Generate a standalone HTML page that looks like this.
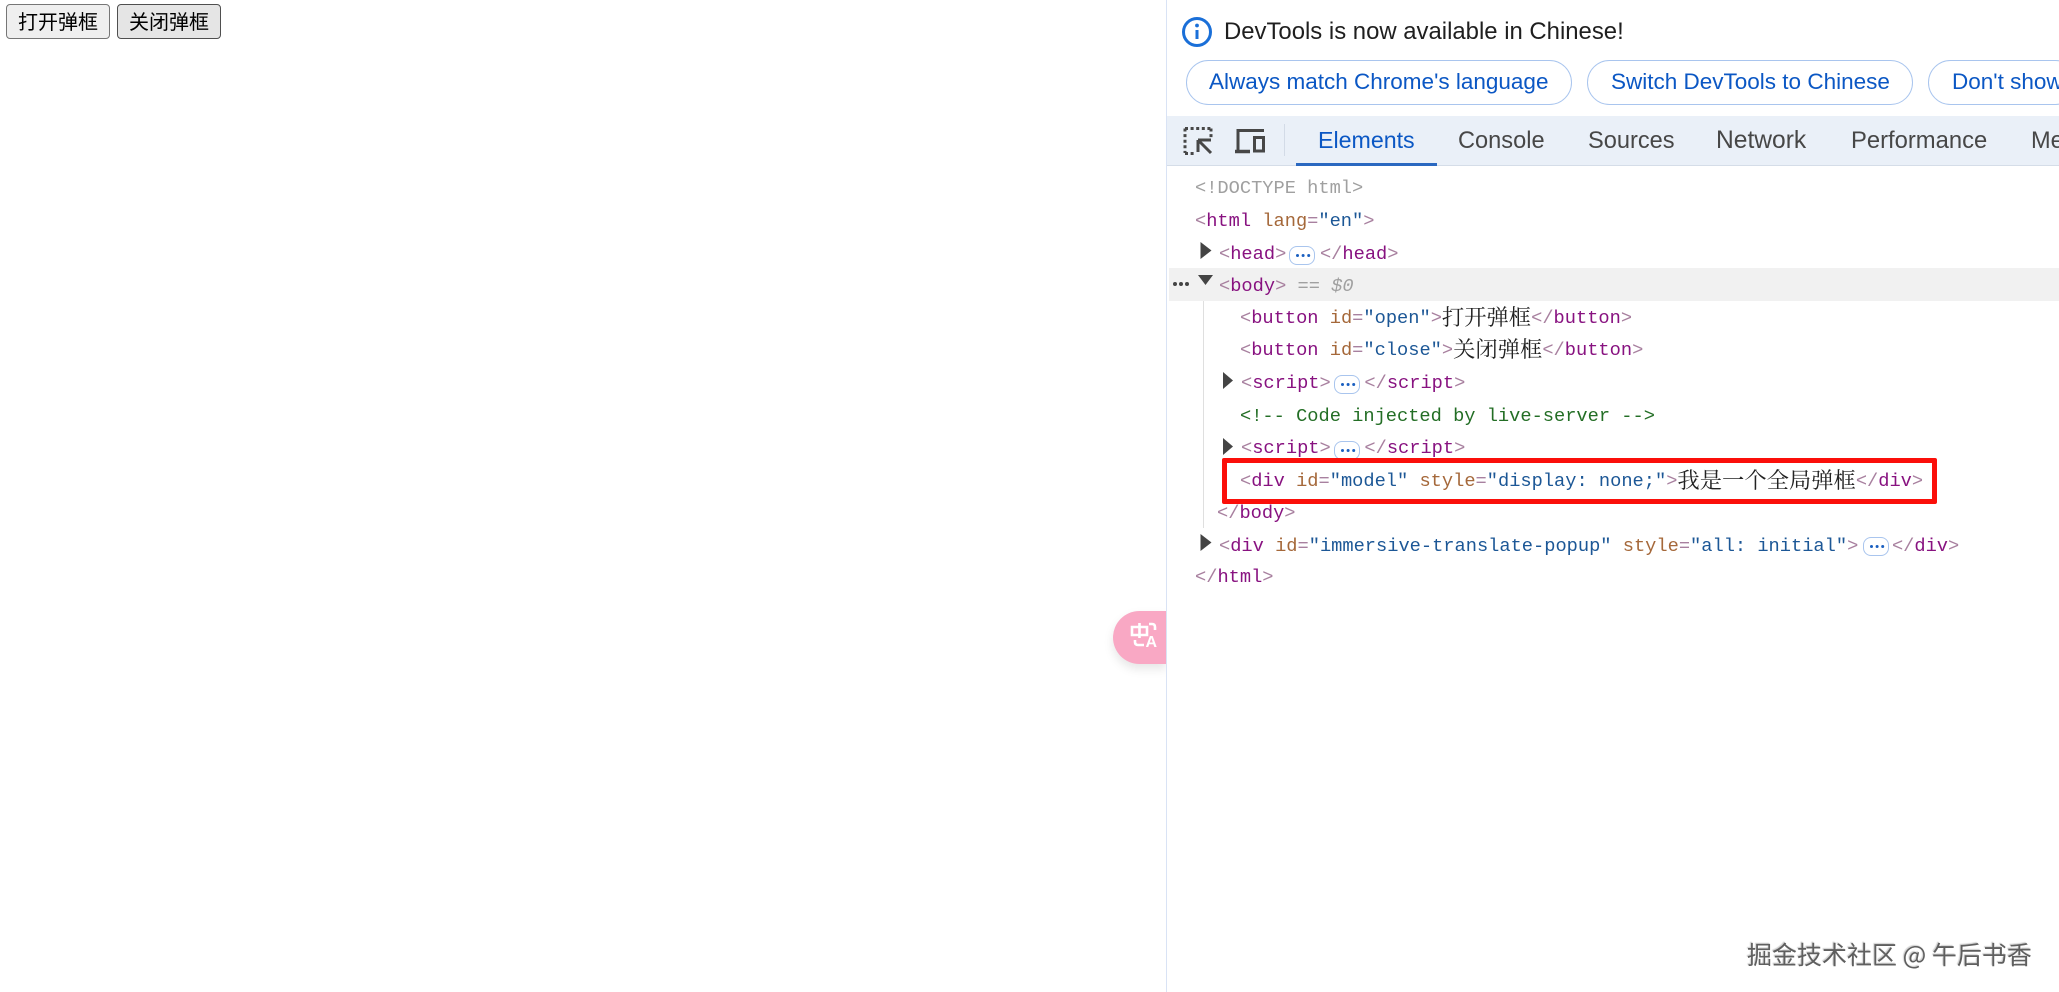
<!DOCTYPE html>
<html lang="en">
<head>
<meta charset="utf-8">
<title>弹框</title>
<style>
html,body{margin:0;padding:0;width:2059px;height:992px;overflow:hidden;background:#fff;position:relative}
body{font-family:"Liberation Sans","Noto Sans CJK SC",sans-serif}
.abs,.btn,.pill,.tab,.l,.dots{position:absolute}
.btn{top:4px;height:35px;width:104px;box-sizing:border-box;border:1.3px solid #767676;border-radius:4px;background:#efefef;color:#000;font:20px/32px "Noto Sans CJK SC",sans-serif;text-align:center}
.pill{top:60px;height:45px;box-sizing:border-box;border:1.3px solid #a9c5ee;border-radius:23px;background:#fff;color:#0b57c4;font-size:22.5px;line-height:41px;white-space:nowrap;overflow:hidden}
.tab{top:117px;height:48px;line-height:48px;font-size:23.6px;color:#474747;white-space:nowrap}
.l{height:32px;line-height:32px;font-family:"Liberation Mono",monospace;font-size:18.7px;white-space:pre;color:#881280}
.b{color:#a8809f}.a{color:#a5683a}.v{color:#1c5796}.c{color:#236e25}.g{color:#a0a0a0}
.z{font-family:"Noto Serif CJK SC","Noto Sans CJK SC",serif;font-size:22.3px;color:#222;line-height:1;position:relative;top:2px}
.dots{width:26px;height:19px;box-sizing:border-box;border:1.2px solid #a9c5ee;border-radius:8px;background:#fff}
.dots:after{content:"";position:absolute;left:5.5px;top:6.5px;width:3.6px;height:3.6px;border-radius:50%;background:#1a5fc0;box-shadow:5.6px 0 0 #1a5fc0,11.2px 0 0 #1a5fc0}
</style>
</head>
<body>
<div class="btn" style="left:6px">打开弹框</div>
<div class="btn" style="left:117px;border-color:#4f4f4f;background:#e5e5e5">关闭弹框</div>

<!-- translate float -->
<div class="abs" style="left:1113px;top:611px;width:53px;height:53px;background:#f9a8c4;border-radius:27px 0 0 27px;box-shadow:0 5px 10px rgba(0,0,0,.1)"></div>
<svg class="abs" style="left:1112px;top:610px" width="54" height="53" viewBox="0 0 54 53" fill="none" stroke="#fff" stroke-width="2.6">
<path d="M20 17h15v8H20zM27.500 13v15"/>
<path d="M37 14h3c2 0 3 1 3 3v3M23 30v2c0 2 1 3 3 3h6"/>
<text x="33.500" y="37" font-family="Liberation Sans" font-size="16" font-weight="bold" fill="#fff" stroke="none">A</text>
</svg>

<!-- devtools -->
<div class="abs" style="left:1166px;top:0;width:893px;height:992px;background:#fff;border-left:1.3px solid #d9e3f5;box-sizing:border-box"></div>

<svg class="abs" style="left:1180px;top:15px" width="34" height="34" viewBox="0 0 34 34" fill="none">
<circle cx="17" cy="17" r="13.500" stroke="#1a6fd8" stroke-width="3"/>
<path d="M17 15v9" stroke="#1a6fd8" stroke-width="3"/><circle cx="17" cy="10.500" r="1.900" fill="#1a6fd8"/>
</svg>
<div class="abs" style="left:1224px;top:14px;line-height:36px;font-size:23.9px;color:#1f1f1f;white-space:nowrap">DevTools is now available in Chinese!</div>

<div class="pill" style="left:1186px;width:386px;padding-left:22px">Always match Chrome's language</div>
<div class="pill" style="left:1587px;width:326px;padding-left:23px">Switch DevTools to Chinese</div>
<div class="pill" style="left:1928px;width:150px;padding-left:23px">Don't show again</div>

<!-- tab bar -->
<div class="abs" style="left:1167px;top:116px;width:892px;height:49px;background:#eaf0f8;border-bottom:1.3px solid #d5dde8"></div>
<svg class="abs" style="left:1180px;top:120px" width="100" height="42" viewBox="0 0 100 42" fill="none" stroke="#474747">
<path d="M5 8.500H31M5 8.500V33M31 8.500V18M5 33.500H14" stroke-width="3" stroke-dasharray="3 2.600"/>
<path d="M18 20H31M18 20V32M18 20L31 33" stroke-width="3"/>
<path d="M58 31V10.500H84" stroke-width="3"/>
<path d="M55 31.500H70" stroke-width="3.500"/>
<rect x="74.500" y="17.500" width="9" height="13.500" stroke-width="3"/>
</svg>
<div class="abs" style="left:1284px;top:124px;width:1px;height:32px;background:#d3dbe7"></div>
<div class="tab" style="left:1318px;top:116px;color:#0b57c4;font-size:23.2px">Elements</div>
<div class="tab" style="left:1458px">Console</div>
<div class="tab" style="left:1588px">Sources</div>
<div class="tab" style="left:1716px;font-size:24.6px">Network</div>
<div class="tab" style="left:1851px;font-size:23.8px">Performance</div>
<div class="tab" style="left:2031px">Memory</div>
<div class="abs" style="left:1296px;top:163px;width:141px;height:3px;background:#2a68c0"></div>

<!-- selection / guide -->
<div class="abs" style="left:1169px;top:268px;width:890px;height:33px;background:#f1f1f1"></div>
<div class="abs" style="left:1203px;top:301px;width:1px;height:227px;background:#dfdfdf"></div>

<!-- code -->
<div class="l g" style="left:1195px;top:172px">&lt;!DOCTYPE html&gt;</div>
<div class="l" style="left:1195px;top:205px"><span class="b">&lt;</span>html <span class="a">lang</span><span class="b">=</span><span class="v">"en"</span><span class="b">&gt;</span></div>
<div class="l" style="left:1219px;top:238px"><span class="b">&lt;</span>head<span class="b">&gt;</span>   <span class="b">&lt;/</span>head<span class="b">&gt;</span></div>
<div class="dots" style="left:1289px;top:246px"></div>
<div class="l" style="left:1219px;top:270px"><span class="b">&lt;</span>body<span class="b">&gt;</span><span class="g" style="font-style:italic"> == $0</span></div>
<div class="l" style="left:1240px;top:302px"><span class="b">&lt;</span>button <span class="a">id</span><span class="b">=</span><span class="v">"open"</span><span class="b">&gt;</span><span class="z">打开弹框</span><span class="b">&lt;/</span>button<span class="b">&gt;</span></div>
<div class="l" style="left:1240px;top:334px"><span class="b">&lt;</span>button <span class="a">id</span><span class="b">=</span><span class="v">"close"</span><span class="b">&gt;</span><span class="z">关闭弹框</span><span class="b">&lt;/</span>button<span class="b">&gt;</span></div>
<div class="l" style="left:1241px;top:367px"><span class="b">&lt;</span>script<span class="b">&gt;</span>   <span class="b">&lt;/</span>script<span class="b">&gt;</span></div>
<div class="dots" style="left:1334px;top:375px"></div>
<div class="l c" style="left:1240px;top:400px">&lt;!-- Code injected by live-server --&gt;</div>
<div class="l" style="left:1241px;top:432px"><span class="b">&lt;</span>script<span class="b">&gt;</span>   <span class="b">&lt;/</span>script<span class="b">&gt;</span></div>
<div class="dots" style="left:1334px;top:441px"></div>
<div class="l" style="left:1240px;top:465px"><span class="b">&lt;</span>div <span class="a">id</span><span class="b">=</span><span class="v">"model"</span> <span class="a">style</span><span class="b">=</span><span class="v">"display: none;"</span><span class="b">&gt;</span><span class="z">我是一个全局弹框</span><span class="b">&lt;/</span>div<span class="b">&gt;</span></div>
<div class="l" style="left:1217px;top:497px"><span class="b">&lt;/</span>body<span class="b">&gt;</span></div>
<div class="l" style="left:1219px;top:530px"><span class="b">&lt;</span>div <span class="a">id</span><span class="b">=</span><span class="v">"immersive-translate-popup"</span> <span class="a">style</span><span class="b">=</span><span class="v">"all: initial"</span><span class="b">&gt;</span>   <span class="b">&lt;/</span>div<span class="b">&gt;</span></div>
<div class="dots" style="left:1863px;top:537px"></div>
<div class="l" style="left:1195px;top:561px"><span class="b">&lt;/</span>html<span class="b">&gt;</span></div>

<!-- arrows -->
<svg class="abs" style="left:1170px;top:234px" width="80" height="340" viewBox="0 0 80 340" fill="#444">
<path d="M30.500 8L41.500 16.500L30.500 25z"/>
<path d="M28 41H43L35.500 51z"/>
<circle cx="5" cy="50" r="2"/><circle cx="11" cy="50" r="2"/><circle cx="17" cy="50" r="2"/>
<path d="M53 138L63 146.500L53 155z"/>
<path d="M53 204L63 212.500L53 221z"/>
<path d="M30.500 300L41.500 308.500L30.500 317z"/>
</svg>

<!-- red highlight -->
<div class="abs" style="left:1222px;top:458px;width:715px;height:46px;box-sizing:border-box;border:5px solid #fb0f0a;border-radius:2px"></div>

<!-- watermark -->
<div class="abs" style="left:1747px;top:934px;font:25px/40px 'Noto Sans CJK SC',sans-serif;color:#5f5f5f;white-space:nowrap;text-shadow:1px 1px 1px #fff,-1px -1px 1px rgba(0,0,0,.2)">掘金技术社区 @ 午后书香</div>
</body>
</html>
